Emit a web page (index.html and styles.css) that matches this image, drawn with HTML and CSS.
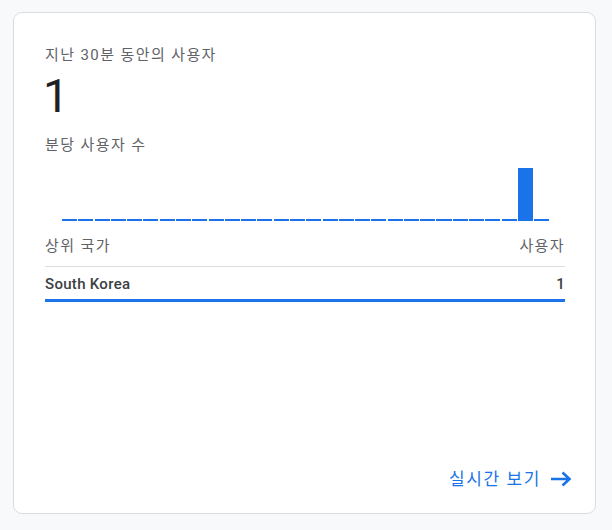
FILE: index.html
```html
<!DOCTYPE html>
<html lang="ko">
<head>
<meta charset="utf-8">
<link rel="stylesheet" href="styles.css">
</head>
<body>
<div class="card">
  <div class="title">지난 30분 동안의 사용자</div>
  <div class="big">1</div>
  <div class="subtitle">분당 사용자 수</div>
  <div class="chart">
    <div class="bar"></div><div class="bar"></div><div class="bar"></div><div class="bar"></div><div class="bar"></div>
    <div class="bar"></div><div class="bar"></div><div class="bar"></div><div class="bar"></div><div class="bar"></div>
    <div class="bar"></div><div class="bar"></div><div class="bar"></div><div class="bar"></div><div class="bar"></div>
    <div class="bar"></div><div class="bar"></div><div class="bar"></div><div class="bar"></div><div class="bar"></div>
    <div class="bar"></div><div class="bar"></div><div class="bar"></div><div class="bar"></div><div class="bar"></div>
    <div class="bar"></div><div class="bar"></div><div class="bar"></div><div class="bar bar-tall"></div><div class="bar"></div>
  </div>
  <div class="table-head">
    <span>상위 국가</span>
    <span>사용자</span>
  </div>
  <div class="row">
    <span>South Korea</span>
    <span>1</span>
  </div>
  <div class="row-bar"><div class="row-bar-fill" style="width:100%"></div></div>
  <div class="footer">
    <a class="link" href="#">실시간 보기
      <svg class="arrow" width="22" height="16" viewBox="0 0 22 16" aria-hidden="true">
        <path d="M1 8H19.5M12.5 1.5L19.5 8L12.5 14.5" fill="none" stroke="#1a73e8" stroke-width="2.6"/>
      </svg>
    </a>
  </div>
</div>
</body>
</html>
```
FILE: styles.css
```css
html, body {
  margin: 0;
  padding: 0;
  background: #f8f9fa;
}
body {
  padding: 12px 16px 16px 13px;
  font-family: Roboto, "Noto Sans CJK KR", sans-serif;
}
.card {
  box-sizing: border-box;
  width: 583px;
  height: 502px;
  background: #fff;
  border: 1px solid #dadce0;
  border-radius: 9px;
  padding: 32px 30px 0 31px;
  display: flex;
  flex-direction: column;
}
.title {
  font-size: 15px;
  line-height: 20px;
  letter-spacing: 1.4px;
  color: #5f6368;
}
.big {
  margin-top: 5px;
  font-size: 46px;
  line-height: 52px;
  color: #202124;
  margin-left: -2px;
}
.subtitle {
  margin-top: 13px;
  font-size: 15px;
  line-height: 20px;
  letter-spacing: 1.4px;
  color: #5f6368;
}
.chart {
  height: 66px;
  margin: 0 16px 0 17px;
  display: flex;
  align-items: flex-end;
  gap: 1.25px;
}
.bar {
  flex: 1;
  height: 2px;
  background: #1a73e8;
}
.bar-tall {
  height: 53px;
}
.table-head {
  margin-top: 15px;
  display: flex;
  justify-content: space-between;
  font-size: 15px;
  line-height: 20px;
  letter-spacing: 1.4px;
  color: #5f6368;
  padding-bottom: 10px;
  border-bottom: 1px solid #dadce0;
}
.row {
  padding-top: 7px;
  display: flex;
  justify-content: space-between;
  font-size: 15px;
  line-height: 20px;
  font-weight: 500;
  letter-spacing: 0.3px;
  color: #3c4043;
}
.row-bar {
  margin-top: 5px;
  height: 3px;
}
.row-bar-fill {
  height: 3px;
  background: #1a73e8;
}
.footer {
  margin-top: auto;
  padding-bottom: 22px;
  display: flex;
  justify-content: flex-end;
}
.link {
  display: flex;
  align-items: center;
  gap: 9px;
  color: #1a73e8;
  text-decoration: none;
  font-size: 17px;
  line-height: 24px;
  letter-spacing: 1.6px;
  margin-right: -7px;
}
.arrow {
  display: block;
}
```
